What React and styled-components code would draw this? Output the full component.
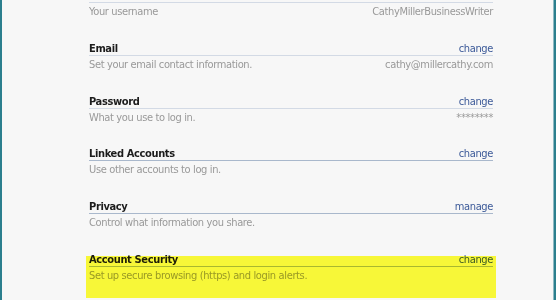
import React from 'react';
import styled, { createGlobalStyle } from 'styled-components';

const GlobalStyle = createGlobalStyle`
  html, body {
    margin: 0;
    padding: 0;
    background: #f7f7f7;
  }
  body {
    font-family: 'DejaVu Sans Condensed', 'DejaVu Sans', sans-serif;
    font-size: 11px;
    letter-spacing: -0.36px;
  }
`;

// Window frame with the teal edges on both sides
const Frame = styled.div`
  height: 300px;
  overflow: hidden;
  box-sizing: border-box;
  border-left: 2px solid #2b7f8e;
  border-right: 2px solid #2b7f8e;
  box-shadow: inset -1px 0 0 #8fb9c3;
  background: #f7f7f7;
`;

const SettingsList = styled.div`
  width: 404px;
  margin-left: 87px;
`;

const Section = styled.div`
  position: relative;
  padding-bottom: 24.75px;

  ${(p) =>
    p.$highlight &&
    `
    &::after {
      content: '';
      position: absolute;
      left: -3px;
      right: -3px;
      top: 2px;
      bottom: 9px;
      background: #ffff3a;
      mix-blend-mode: multiply;
      pointer-events: none;
    }
  `}
`;

const Header = styled.div`
  display: flex;
  justify-content: space-between;
  align-items: flex-end;
  height: ${(p) => (p.$bare ? '2px' : '12px')};
  line-height: 12px;
  border-bottom: 1px solid ${(p) => p.$line || '#d3dae5'};
`;

const Title = styled.span`
  font-weight: bold;
  color: #1c1c1c;
`;

const Action = styled.a`
  color: #3b5998;
  text-decoration: none;
  cursor: pointer;
`;

const Details = styled.div`
  display: flex;
  justify-content: space-between;
  padding-top: 2px;
  line-height: 13px;
  color: #999;
`;

const Value = styled.span`
  color: #999;
`;

const settings = [
  { id: 'username', desc: 'Your username', value: 'CathyMillerBusinessWriter' },
  { id: 'email', title: 'Email', action: 'change', desc: 'Set your email contact information.', value: 'cathy@millercathy.com' },
  { id: 'password', title: 'Password', action: 'change', desc: 'What you use to log in.', value: '********' },
  { id: 'linked', title: 'Linked Accounts', action: 'change', desc: 'Use other accounts to log in.', line: '#a9b8cc' },
  { id: 'privacy', title: 'Privacy', action: 'manage', desc: 'Control what information you share.', line: '#a9b8cc' },
  { id: 'security', title: 'Account Security', action: 'change', desc: 'Set up secure browsing (https) and login alerts.', line: '#a9b8cc', highlight: true },
];

const App = () => (
  <>
    <GlobalStyle />
    <Frame>
      <SettingsList>
        {settings.map((s) => (
          <Section key={s.id} $highlight={s.highlight}>
            <Header $line={s.line} $bare={!s.title}>
              {s.title && <Title>{s.title}</Title>}
              {s.action && <Action>{s.action}</Action>}
            </Header>
            <Details>
              <span>{s.desc}</span>
              {s.value && <Value>{s.value}</Value>}
            </Details>
          </Section>
        ))}
      </SettingsList>
    </Frame>
  </>
);

export default App;
